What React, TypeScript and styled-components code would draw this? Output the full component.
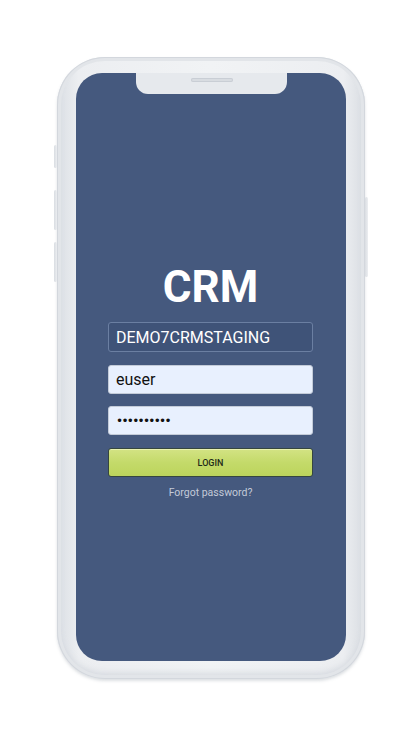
import React from "react";
import styled, { createGlobalStyle } from "styled-components";

const Global = createGlobalStyle`
  html, body { margin: 0; padding: 0; background: #ffffff; }
  body { font-family: Roboto, "Liberation Sans", sans-serif; }
`;

const Page = styled.div`
  width: 419px;
  height: 733px;
  display: flex;
  padding: 57px 0 0 57px;
  box-sizing: border-box;
`;

const Phone = styled.div`
  position: relative;
  width: 308px;
  height: 622px;
  box-sizing: border-box;
  padding: 16px 19px 18px 19px;
  border-radius: 48px;
  background: linear-gradient(90deg, #dadee4 0%, #eceef1 7%, #f1f3f5 50%, #eceef1 93%, #d9dde2 100%);
  box-shadow: inset 0 0 0 1px #d3d7dd, inset 0 0 0 4px #e2e5e9, inset 0 -6px 6px rgba(190, 196, 205, 0.5), 0 2px 3px rgba(120, 130, 145, 0.25);
`;

const SideButton = styled.div<{ $top: number; $h: number; $right?: boolean }>`
  position: absolute;
  top: ${(p) => p.$top}px;
  ${(p) => (p.$right ? "right: -3px;" : "left: -3px;")}
  width: 3px;
  height: ${(p) => p.$h}px;
  border-radius: 2px;
  background: linear-gradient(90deg, #d9dde2, #eceef1);
`;

const Screen = styled.div`
  position: relative;
  width: 270px;
  height: 588px;
  border-radius: 26px;
  background: #45597e;
  overflow: hidden;
  display: flex;
  flex-direction: column;
  align-items: stretch;
  padding: 188px 33px 0 32px;
  box-sizing: border-box;
`;

const Notch = styled.div`
  position: absolute;
  top: 0;
  left: 60px;
  width: 151px;
  height: 21px;
  background: #e6e9ed;
  border-radius: 0 0 12px 12px;
  display: flex;
  justify-content: center;
  padding-top: 5px;
  box-sizing: border-box;
`;

const Speaker = styled.div`
  width: 42px;
  height: 4px;
  border-radius: 3px;
  background: #d8dce1;
  box-shadow: inset 0 0 0 1px #c9ced5;
`;

const Title = styled.h1`
  margin: 0 0 9px 0;
  text-align: center;
  color: #ffffff;
  font-family: Roboto, "Liberation Sans", sans-serif;
  font-weight: 700;
  font-size: 44px;
  line-height: 52px;
`;

const Field = styled.div<{ $dark?: boolean; $h: number; $mb: number }>`
  height: ${(p) => p.$h}px;
  margin-bottom: ${(p) => p.$mb}px;
  box-sizing: border-box;
  border-radius: 3px;
  display: flex;
  align-items: center;
  padding: 0 7px;
  font-family: Roboto, "Liberation Sans", sans-serif;
  font-size: 16px;
  ${(p) =>
    p.$dark
      ? `background: #3f5378; border: 1px solid #6b7fa2; color: #ffffff;`
      : `background: #e8f0fe; border: 1px solid #c3cbd8; color: #111111;`}
`;

const Dots = styled.span`
  font-family: "DejaVu Sans", sans-serif;
  font-size: 12px;
  letter-spacing: -1.7px;
  color: #111;
`;

const LoginButton = styled.button`
  height: 29px;
  margin: 0;
  border: 1px solid #36463f;
  border-radius: 3px;
  background: linear-gradient(180deg, #d3e384 0%, #c4da6a 50%, #bcd45c 100%);
  box-shadow: inset 0 1px 0 #e8f2b0;
  font-family: Roboto, "Liberation Sans", sans-serif;
  font-weight: 500;
  font-size: 9px;
  color: #1e2a18;
  cursor: pointer;
`;

const Forgot = styled.div`
  margin-top: 9px;
  text-align: center;
  font-family: Roboto, "Liberation Sans", sans-serif;
  font-size: 10.5px;
  color: #c3cad8;
`;

export default function App() {
  return (
    <>
      <Global />
      <Page>
        <Phone>
          <SideButton $top={88} $h={23} />
          <SideButton $top={133} $h={40} />
          <SideButton $top={185} $h={40} />
          <SideButton $top={140} $h={80} $right />
          <Screen>
            <Notch>
              <Speaker />
            </Notch>
            <Title>CRM</Title>
            <Field $dark $h={30} $mb={13}>DEMO7CRMSTAGING</Field>
            <Field $h={29} $mb={12}>euser</Field>
            <Field $h={29} $mb={13}>
              <Dots>••••••••••</Dots>
            </Field>
            <LoginButton>LOGIN</LoginButton>
            <Forgot>Forgot password?</Forgot>
          </Screen>
        </Phone>
      </Page>
    </>
  );
}
